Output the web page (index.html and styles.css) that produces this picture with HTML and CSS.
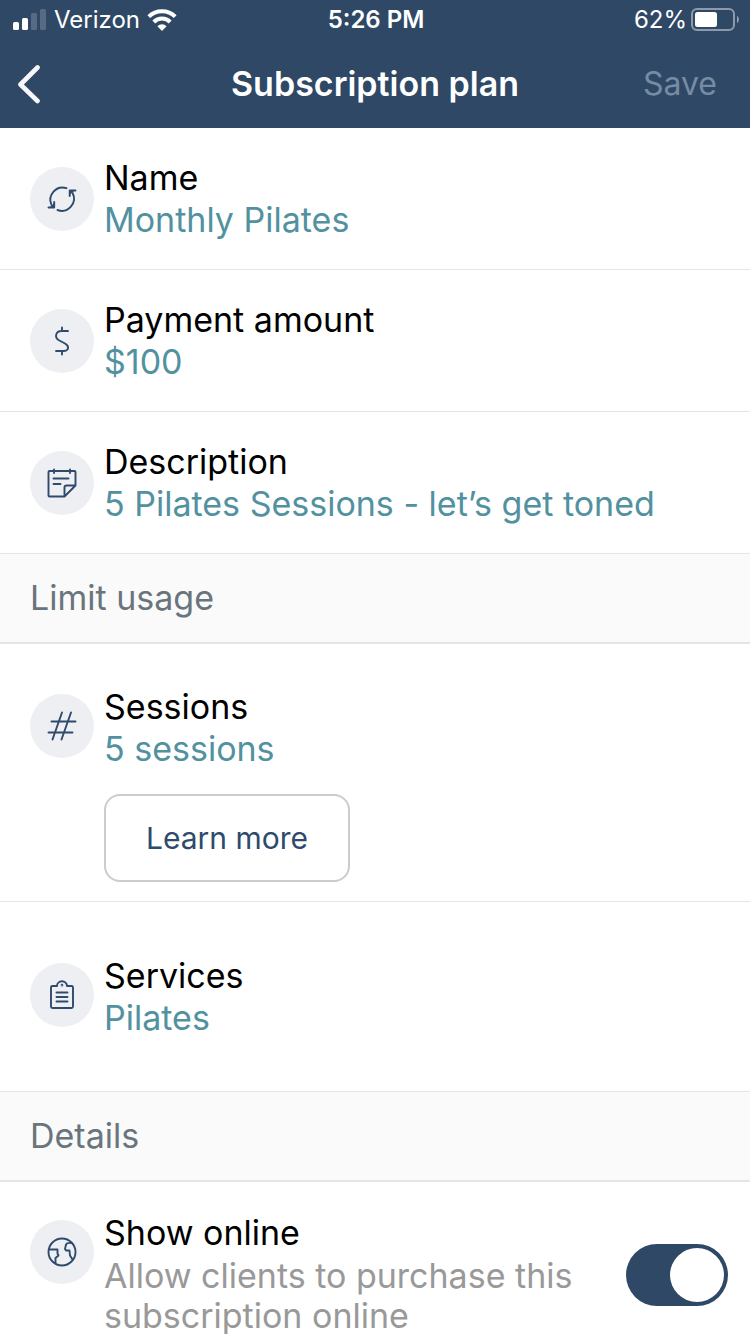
FILE: index.html
```html
<!DOCTYPE html>
<html lang="en">
<head>
<meta charset="utf-8">
<meta name="viewport" content="width=device-width">
<title>Subscription plan</title>
<link rel="stylesheet" href="styles.css">
</head>
<body>
<header class="top">
  <div class="status">
    <div class="status-left">
      <svg width="34" height="22" viewBox="0 0 34 22" fill="#fff" aria-hidden="true">
        <rect x="0" y="13" width="6" height="8" rx="1.5"/>
        <rect x="9" y="9" width="6" height="12" rx="1.5"/>
        <rect x="18" y="4" width="6" height="17" rx="1.5" opacity=".2"/>
        <rect x="27" y="0" width="6" height="21" rx="1.5" opacity=".2"/>
      </svg>
      <span>Verizon</span>
      <svg width="30" height="22" viewBox="0 0 30 22" fill="none" stroke="#fff" stroke-width="4" aria-hidden="true">
        <path d="M1.8 7.6a18.8 18.8 0 0 1 26.4 0"/>
        <path d="M6.8 13a11.5 11.5 0 0 1 16.4 0"/>
        <path d="M15 22l-4.600-4.800a6.600 6.600 0 0 1 9.200 0z" fill="#fff" stroke="none"/>
      </svg>
    </div>
    <time class="clock">5:26 PM</time>
    <div class="status-right">
      <span>62%</span>
      <svg width="48" height="24" viewBox="0 0 48 24" fill="none" aria-hidden="true">
        <rect x="1" y="1" width="42" height="21" rx="5" stroke="#fff" stroke-opacity=".45" stroke-width="2"/>
        <rect x="4" y="4" width="22" height="15" rx="2.500" fill="#fff"/>
        <path d="M46 8c2.400 1 2.400 6 0 7z" fill="#fff" fill-opacity=".5"/>
      </svg>
    </div>
  </div>
  <nav class="nav">
    <button class="back" type="button" aria-label="Back">
      <svg width="24" height="40" viewBox="0 0 24 40" fill="none" stroke="#f8f7fa" stroke-width="4.600" stroke-linecap="round" stroke-linejoin="round" aria-hidden="true"><path d="M20.500 3.500L3.500 20.500L20.500 37"/></svg>
    </button>
    <h1 class="title">Subscription plan</h1>
    <button class="save" type="button" disabled>Save</button>
  </nav>
</header>

<main>
  <section class="row">
    <span class="badge">
      <svg class="icon" viewBox="0 0 32 32" aria-hidden="true"><path d="M20.500 5.200A12.200 12.200 0 0 0 5.500 21.800M11.500 27A12.200 12.200 0 0 0 26.600 10"/><path d="M2.500 24.500h5.700v-5.500M29.500 7.500h-5.800v5.500"/><path class="solid" d="M3.500 24.500L8.200 20v4.500zM28.500 7.500L23.700 12V7.500z"/></svg>
    </span>
    <div class="text"><h2 class="label">Name</h2><p class="value">Monthly Pilates</p></div>
  </section>
  <section class="row">
    <span class="badge">
      <svg class="icon" viewBox="0 0 32 32" aria-hidden="true"><path d="M22 6h-6.500c-6 0-7 6.500-3 9l6.500 3.500c5 3 3.500 7.500-1.500 7.500H10M16 2.500v3.500M16 26v3.500"/></svg>
    </span>
    <div class="text"><h2 class="label">Payment amount</h2><p class="value">$100</p></div>
  </section>
  <section class="row">
    <span class="badge">
      <svg class="icon" viewBox="0 0 32 32" aria-hidden="true"><path d="M3.500 4h25a1 1 0 0 1 1 1v13.500L18.500 29.500h-15a1 1 0 0 1-1-1V5a1 1 0 0 1 1-1zM29.500 18.500h-9a2 2 0 0 0-2 2v9M8 2.500V6M24 2.500V6M7.500 11.500h15M7.500 17h7"/></svg>
    </span>
    <div class="text"><h2 class="label">Description</h2><p class="value">5 Pilates Sessions - let’s get toned</p></div>
  </section>

  <h2 class="group">Limit usage</h2>
  <section class="row row-sessions">
    <span class="badge">
      <svg class="icon" viewBox="0 0 32 32" aria-hidden="true"><path d="M16 2.500L6.500 29.500M25 2.500L15.500 29.500M5.500 11.500h24M2.500 22.500h24"/></svg>
    </span>
    <div class="text">
      <h2 class="label">Sessions</h2><p class="value">5 sessions</p>
      <button class="learn" type="button">Learn more</button>
    </div>
  </section>
  <section class="row row-services">
    <span class="badge">
      <svg class="icon" viewBox="0 0 32 32" aria-hidden="true"><path d="M11 7H6.500A1.500 1.500 0 0 0 5 8.500v19A1.500 1.500 0 0 0 6.500 29h19a1.500 1.500 0 0 0 1.500-1.500v-19A1.500 1.500 0 0 0 25.500 7H21a5 4.700 0 0 0-10 0zM10.500 13.500h11M10.500 18h11M10.500 22.500h11"/><circle cx="16" cy="6.200" r=".4"/></svg>
    </span>
    <div class="text"><h2 class="label">Services</h2><p class="value">Pilates</p></div>
  </section>

  <h2 class="group">Details</h2>
  <section class="row row-online">
    <span class="badge">
      <svg class="icon" viewBox="0 0 32 32" aria-hidden="true"><circle cx="16" cy="16" r="13.500"/><path d="M3 13.500h8.500v4l1 2-3 2.500v4.500M25.500 7c-3.500-.5-5 .5-5.500 1.500l-1 4.500 1 1.500h3.500l.5 5 2.500 4"/></svg>
    </span>
    <div class="text">
      <label class="label" for="show-online">Show online</label>
      <p class="note" id="online-note">Allow clients to purchase this subscription online</p>
    </div>
    <input class="toggle" id="show-online" type="checkbox" role="switch" aria-describedby="online-note" checked>
  </section>
</main>
</body>
</html>
```
FILE: styles.css
```css
* {
  box-sizing: border-box;
}

html {
  scrollbar-width: none;
}

body,
h1,
h2,
p {
  margin: 0;
}

body {
  background: #fff;
  font-family: Inter, "Liberation Sans", sans-serif;
  font-size: 34px;
  line-height: 42px;
  color: #000;
}

button {
  margin: 0;
  padding: 0;
  border: 0;
  background: none;
  font: inherit;
}

.top {
  position: sticky;
  top: 0;
  background: #2e4866;
  color: #fff;
}

.status {
  display: grid;
  grid-template-columns: 1fr auto 1fr;
  align-items: center;
  height: 40px;
  padding: 0 11px 0 13px;
  font-size: 24px;
  line-height: 40px;
}

.status-left,
.status-right {
  display: flex;
  align-items: center;
}

.status-left {
  gap: 7px;
}

.status-right {
  justify-content: flex-end;
  gap: 4px;
}

.clock {
  font-weight: 600;
}

.nav {
  display: grid;
  grid-template-columns: 1fr auto 1fr;
  align-items: center;
  height: 88px;
  padding: 0 17px;
}

.back {
  display: flex;
  justify-self: start;
}

.title {
  font-size: 34px;
  font-weight: 600;
}

.save {
  justify-self: end;
  padding-right: 16px;
  color: #778ba3;
  font-size: 32px;
}

.row {
  display: flex;
  align-items: flex-start;
  gap: 10px;
  padding: 29px 22px 28px 30px;
  border-bottom: 1px solid #e2e6e7;
}

.badge {
  display: grid;
  place-items: center;
  flex: none;
  width: 64px;
  height: 64px;
  margin-top: 10px;
  border-radius: 50%;
  background: #eeeff3;
}

.icon {
  width: 32px;
  height: 32px;
  fill: none;
  stroke: #2e4a6d;
  stroke-width: 1.9;
  stroke-linecap: round;
  stroke-linejoin: round;
}

.icon .solid {
  fill: #2e4a6d;
  stroke: none;
}

.text {
  flex: 1;
  min-width: 0;
}

.label {
  display: block;
  font-size: 34px;
  font-weight: 400;
}

.value {
  color: #5291a0;
}

.note {
  padding-top: 2px;
  line-height: 40px;
  color: #999;
}

.group {
  height: 90px;
  padding-left: 30px;
  border-bottom: 2px solid #e2e6e7;
  background: #fafafa;
  color: #69757d;
  font-size: 34px;
  font-weight: 400;
  line-height: 88px;
}

.row-sessions {
  padding-top: 42px;
  padding-bottom: 19px;
}

.row-services {
  padding-top: 53px;
  padding-bottom: 52px;
}

.row-online {
  padding-top: 30px;
}

.row-sessions .badge,
.row-services .badge,
.row-online .badge {
  margin-top: 8px;
}

.learn {
  display: block;
  margin-top: 24px;
  padding: 0 40px;
  border: 2px solid #ccc;
  border-radius: 16px;
  color: #2e4a6d;
  font-size: 30px;
  line-height: 84px;
}

.toggle {
  appearance: none;
  flex: none;
  display: flex;
  justify-content: flex-start;
  width: 102px;
  height: 62px;
  margin: 32px 0 0;
  padding: 4px;
  border-radius: 31px;
  background: #c8cdd3;
}

.toggle::before {
  content: "";
  width: 54px;
  height: 54px;
  border-radius: 50%;
  background: #fff;
}

.toggle:checked {
  justify-content: flex-end;
  background: #2e4866;
}
```
